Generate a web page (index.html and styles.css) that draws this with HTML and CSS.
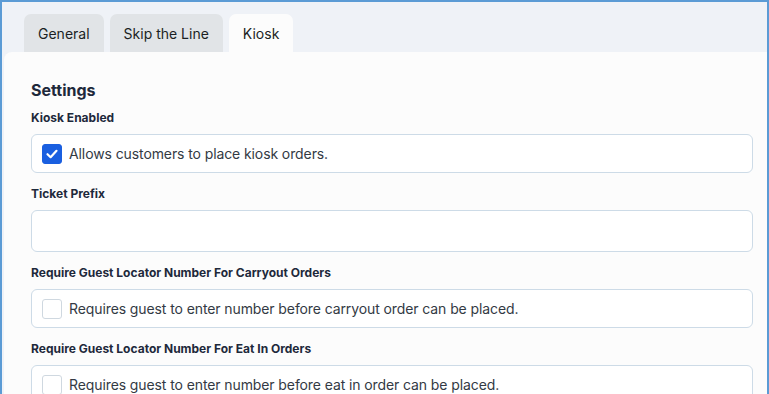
FILE: index.html
```html
<!DOCTYPE html>
<html lang="en">
<head>
    <meta charset="UTF-8">
    <meta name="viewport" content="width=device-width, initial-scale=1.0">
    <title>Kiosk Settings</title>
    <link rel="stylesheet" href="styles.css">
</head>
<body>

    <div class="frame">
        <div class="tabs">
            <div class="tab">General</div>
            <div class="tab">Skip the Line</div>
            <div class="tab active">Kiosk</div>
        </div>

        <div class="panel">
            <h2>Settings</h2>

            <div class="field">
                <label>Kiosk Enabled</label>
                <div class="check-row">
                    <span class="box checked">
                        <svg width="14" height="14" viewBox="0 0 14 14"><path d="M2.5 7.2 L5.6 10.2 L11.5 3.8" fill="none" stroke="#fff" stroke-width="2.2" stroke-linecap="round" stroke-linejoin="round"/></svg>
                    </span>
                    <span>Allows customers to place kiosk orders.</span>
                </div>
            </div>

            <div class="field">
                <label>Ticket Prefix</label>
                <input type="text">
            </div>

            <div class="field">
                <label>Require Guest Locator Number For Carryout Orders</label>
                <div class="check-row">
                    <span class="box"></span>
                    <span>Requires guest to enter number before carryout order can be placed.</span>
                </div>
            </div>

            <div class="field">
                <label>Require Guest Locator Number For Eat In Orders</label>
                <div class="check-row">
                    <span class="box"></span>
                    <span>Requires guest to enter number before eat in order can be placed.</span>
                </div>
            </div>
        </div>
    </div>

</body>
</html>
```

FILE: styles.css
```css
html, body {
    margin: 0;
    height: 100%;
    overflow: hidden;
}
body {
    font-family: Inter, "Noto Sans", sans-serif;
    background-color: #5b9bd5;
    color: #1f2937;
}
.frame {
    box-sizing: border-box;
    height: 392px;
    margin: 2px 2px 0 2px;
    background-color: #eff2f7;
    display: flex;
    flex-direction: column;
    overflow: hidden;
}
.tabs {
    display: flex;
    gap: 6px;
    padding: 12px 0 0 22px;
}
.tab {
    height: 38px;
    padding: 0 14px;
    display: flex;
    align-items: center;
    font-size: 14px;
    background-color: #e1e4e7;
    color: #1b1f24;
    border-radius: 7px 7px 0 0;
}
.tab.active {
    background-color: #fcfcfc;
}
.panel {
    flex: 1;
    margin-left: 2px;
    padding: 27px 14px 0 27px;
    background-color: #fcfcfc;
    border-radius: 8px 0 0 0;
}
.panel h2 {
    margin: 0 0 9px 0;
    font-size: 16px;
    line-height: 22px;
    font-weight: 700;
    color: #1e293b;
}
.field {
    margin-bottom: 13px;
}
.field label {
    display: block;
    font-size: 12px;
    line-height: 16px;
    font-weight: 700;
    color: #1e293b;
    margin-bottom: 8px;
}
.check-row {
    box-sizing: border-box;
    height: 39px;
    display: flex;
    align-items: center;
    gap: 7px;
    padding: 0 10px;
    background-color: #fff;
    border: 1px solid #cddbe7;
    border-radius: 6px;
    font-size: 14px;
    letter-spacing: -0.1px;
    color: #333a44;
}
.box {
    box-sizing: border-box;
    width: 20px;
    height: 20px;
    border: 1px solid #cfd8e0;
    border-radius: 3px;
    background-color: #fff;
    display: flex;
    align-items: center;
    justify-content: center;
}
.box.checked {
    background-color: #1a5fe0;
    border-color: #1a5fe0;
}
.field input {
    box-sizing: border-box;
    display: block;
    width: 100%;
    height: 42px;
    border: 1px solid #cddbe7;
    border-radius: 6px;
    background-color: #fff;
}
```
